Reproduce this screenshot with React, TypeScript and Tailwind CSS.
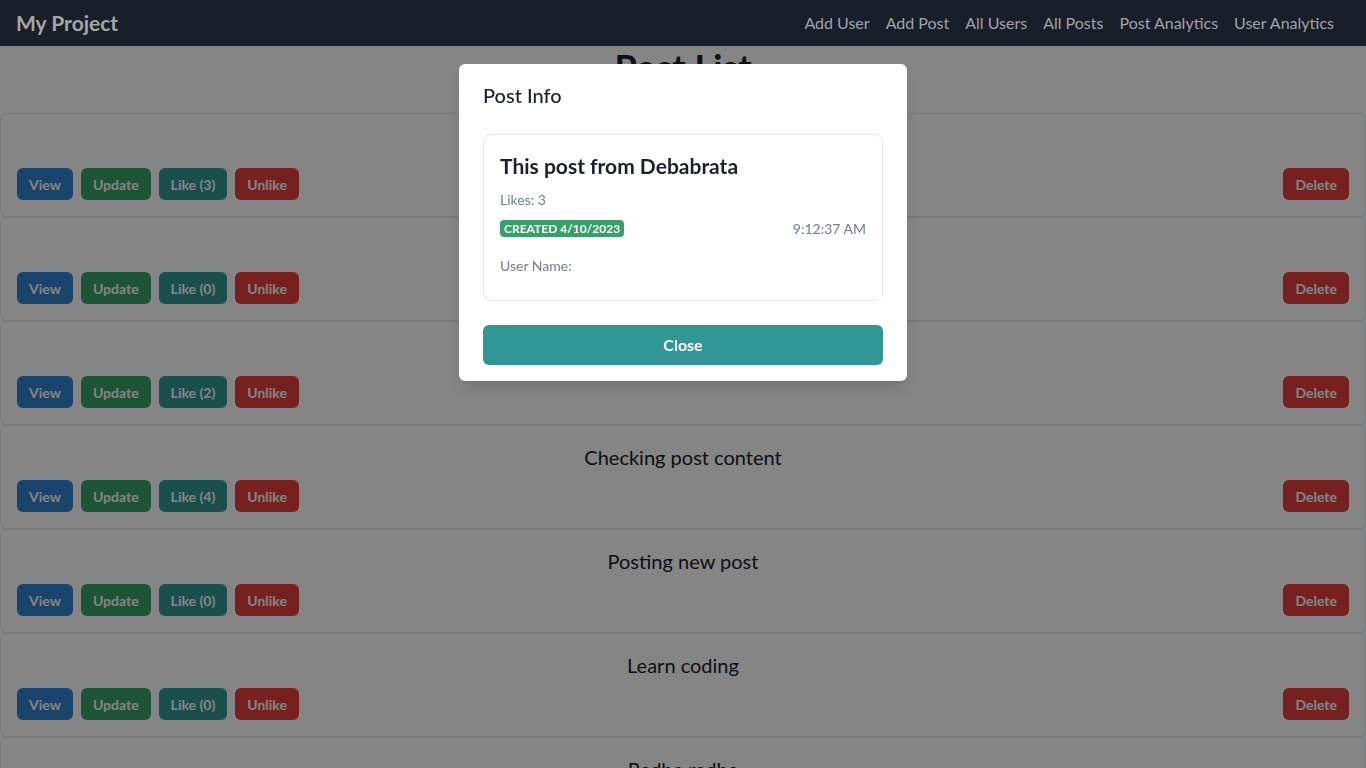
import React from "react";

const posts = [
  { text: "This post from Debabrata", likes: 3 },
  { text: "Hello everyone", likes: 0 },
  { text: "My first post", likes: 2 },
  { text: "Checking post content", likes: 4 },
  { text: "Posting new post", likes: 0 },
  { text: "Learn coding", likes: 0 },
  { text: "Radhe radhe", likes: 1 },
];

const font = { fontFamily: 'Lato, "Noto Sans", sans-serif' };

export default function App() {
  return (
    <div className="min-h-screen bg-white text-[#1a202c]" style={font}>
      <nav className="relative z-50 flex h-[46px] items-center justify-between bg-[#181e2a] pl-4 pr-8">
        <div className="text-[21px] font-bold text-[#a6a6a6]">My Project</div>
        <div className="flex items-center gap-4 text-[16px] text-[#a0a4aa]">
          <span>Add User</span>
          <span>Add Post</span>
          <span>All Users</span>
          <span>All Posts</span>
          <span>Post Analytics</span>
          <span>User Analytics</span>
        </div>
      </nav>
      <h1 className="mb-6 text-center text-[36px] font-bold leading-[43px]">Post List</h1>
      <div className="flex flex-col">
        {posts.map((p, i) => (
          <div key={i} className="flex flex-col gap-2 rounded-md border border-[#e2e8f0] p-4">
            <div className="text-center text-[20px] leading-[30px]">{p.text}</div>
            <div className="flex items-center justify-between">
              <div className="flex gap-2">
                <button className="h-8 rounded-md bg-[#3182ce] px-3 text-[14px] font-bold text-white">View</button>
                <button className="h-8 rounded-md bg-[#38a169] px-3 text-[14px] font-bold text-white">Update</button>
                <button className="h-8 rounded-md bg-[#319795] px-3 text-[14px] font-bold text-white">Like ({p.likes})</button>
                <button className="h-8 rounded-md bg-[#e53e3e] px-3 text-[14px] font-bold text-white">Unlike</button>
              </div>
              <button className="h-8 rounded-md bg-[#e53e3e] px-3 text-[14px] font-bold text-white">Delete</button>
            </div>
          </div>
        ))}
      </div>

      <div className="fixed inset-0 z-40 bg-black/[0.48]" />
      <div className="fixed inset-0 z-[60] flex justify-center">
        <div className="mt-16 h-fit w-[448px] rounded-md bg-white shadow-lg">
          <div className="px-6 py-4 text-[20px] font-medium leading-[30px]">Post Info</div>
          <div className="px-6 py-2">
            <div className="rounded-lg border border-[#e2e8f0] px-4 pt-4 pb-6">
              <div className="text-[21px] font-bold leading-[30px]">This post from Debabrata</div>
              <div className="mt-2 text-[14px] leading-[21px] text-[#718096]">Likes: 3</div>
              <div className="mt-2 flex items-center justify-between text-[14px] leading-[21px] text-[#718096]">
                <span className="rounded-sm bg-[#38a169] px-1 text-[12px] font-bold uppercase leading-[17px] text-white">
                  Created 4/10/2023
                </span>
                <span>9:12:37 AM</span>
              </div>
              <div className="mt-4 text-[14px] leading-[21px] text-[#718096]">User Name:</div>
            </div>
          </div>
          <div className="px-6 py-4">
            <button className="h-10 w-full rounded-md bg-[#319795] text-[16px] font-bold text-white">Close</button>
          </div>
        </div>
      </div>
    </div>
  );
}
